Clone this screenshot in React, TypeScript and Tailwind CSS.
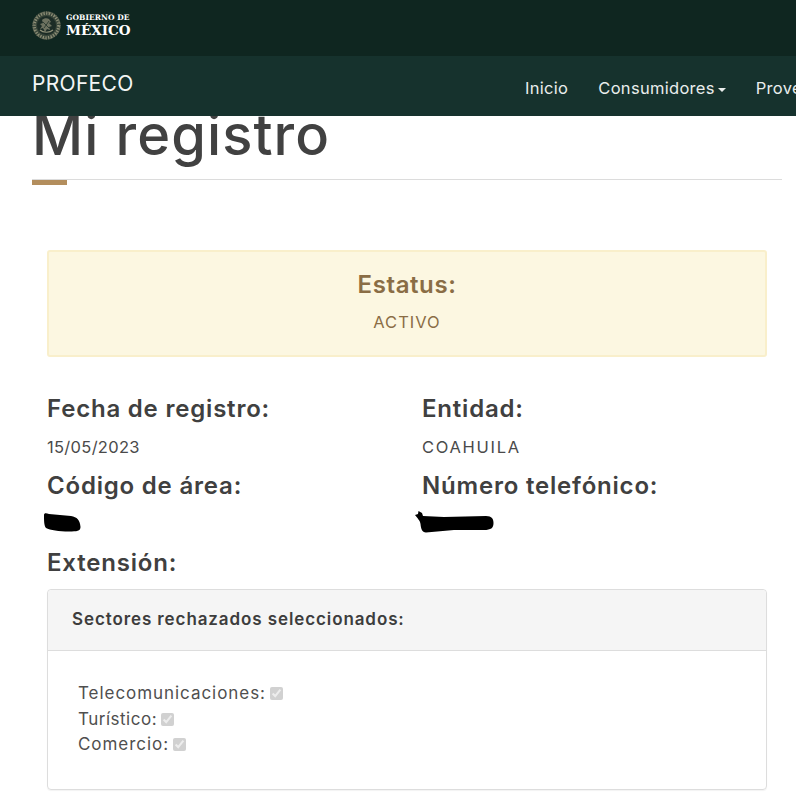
import React from "react";

const font = { fontFamily: "Inter, 'Open Sans', sans-serif" };

function Emblem() {
  const ticks = Array.from({ length: 40 }, (_, i) => (i * 360) / 40);
  return (
    <svg width="29" height="29" viewBox="0 0 29 29" className="shrink-0">
      <circle cx="14.5" cy="14.5" r="14.3" fill="#39463a" />
      <circle cx="14.5" cy="14.5" r="12.2" fill="none" stroke="#8f9078" strokeWidth="3" strokeDasharray="1.3 1.4" />
      {ticks.map((a) => (
        <line key={a} x1="14.5" y1="0.4" x2="14.5" y2="2" stroke="#6f7360" strokeWidth="0.8" transform={`rotate(${a} 14.5 14.5)`} />
      ))}
      <circle cx="14.5" cy="14.5" r="9.6" fill="#1c2c26" />
      <path d="M10 9c2-2 5-2 7-1l2 3-2 1 3 3-3 1 1 3-3-1-2 3-2-4-3 1 2-3-2-2 3-1z" fill="#6e7260" />
      <path d="M8 19c3 3 10 3 13 0" fill="none" stroke="#8f9078" strokeWidth="1.2" />
      <path d="M11 11l6 6M17 10l-5 7" stroke="#23332b" strokeWidth="0.8" />
    </svg>
  );
}

function Label({ children }: { children: React.ReactNode }) {
  return <h4 className="text-[24px] leading-[30px] font-semibold text-[#404040] tracking-[0.8px]">{children}</h4>;
}

function Value({ children, className = "" }: { children?: React.ReactNode; className?: string }) {
  return <div className={`h-[47px] pt-[12px] text-[16.5px] leading-[22px] text-[#4a4a4a] ${className}`}>{children}</div>;
}

function Check({ label, className = "" }: { label: string; className?: string }) {
  return (
    <div className={`flex items-center h-[25.5px] text-[#4f4f4f] text-[17px] leading-[25px] ${className}`}>
      <span>{label}:</span>
      <input type="checkbox" checked disabled readOnly className="ml-[4px] w-[13px] h-[13px]" />
    </div>
  );
}

export default function App() {
  return (
    <div className="w-[796px] h-[807px] overflow-hidden bg-white" style={font}>
      <header className="relative z-10 h-[56px] bg-[#0f2620] flex items-center pl-[32px] pb-[6px] gap-[5px]">
        <Emblem />
        <div className="text-white font-bold pt-[1px]" style={{ fontFamily: "'DejaVu Serif', serif" }}>
          <div className="text-[7.5px] leading-[10px] tracking-[0.05px]">GOBIERNO DE</div>
          <div className="text-[13.5px] leading-[15px]">MÉXICO</div>
        </div>
      </header>
      <nav className="relative z-10 h-[60px] bg-[#16322d] flex justify-between text-white overflow-hidden">
        <a className="ml-[32px] mt-[14px] text-[21px] leading-[28px] text-[#f4f6f5] tracking-[0.3px]">PROFECO</a>
        <ul className="flex shrink-0 gap-[30px] h-[22px] mt-[21px] text-[16.5px] leading-[22px] text-[#e9edec] -mr-[50px] w-[321px] tracking-[0.3px]">
          <li>Inicio</li>
          <li className="flex items-center">
            Consumidores
            <span className="ml-[3px] mt-[3px] w-0 h-0 border-x-[4px] border-x-transparent border-t-[4px] border-t-[#e9edec]" />
          </li>
          <li>Proveedores</li>
        </ul>
      </nav>
      <main className="pl-[32px] pr-[14px]">
        <div className="relative flow-root border-b border-[#dcdcdc] h-[64px]">
          <h1 className="-mt-[14px] text-[56px] leading-[66px] font-[550] text-[#414141] tracking-[1.1px]">Mi registro</h1>
          <span className="absolute left-0 top-[64px] w-[35px] h-[5px] bg-[#b38e5d]" />
        </div>
        <div className="pl-[15px] pr-[15px]">
          <div className="mt-[70px] h-[107px] rounded-[3px] border-2 border-[#f9efcb] bg-[#fcf7e1] flex flex-col items-center text-[#8a6d45]">
            <div className="mt-[18px] text-[24px] leading-[30px] font-semibold tracking-[0.6px]">Estatus:</div>
            <div className="mt-[11px] text-[16.5px] leading-[22px] tracking-[1px]">ACTIVO</div>
          </div>
          <div className="mt-[37px] grid grid-cols-[375px_1fr]">
            <div>
              <Label>Fecha de registro:</Label>
              <Value className="tracking-[0.3px]">15/05/2023</Value>
            </div>
            <div>
              <Label>Entidad:</Label>
              <Value className="tracking-[1.7px]">COAHUILA</Value>
            </div>
            <div>
              <Label>Código de área:</Label>
              <Value>
                <svg width="40" height="22" viewBox="0 0 40 22" className="-ml-[4px] -mt-[1px] block">
                  <path d="M1 3 C1 1 3 1 6 2 L28 4 C34 5 37 8 37.500 15 C37.500 19 34 19.500 26 19.500 C16 19.500 7 18 3 16 C1 14 1 8 1 3Z" fill="#000" />
                </svg>
              </Value>
            </div>
            <div>
              <Label>Número telefónico:</Label>
              <Value>
                <svg width="82" height="26" viewBox="0 0 82 26" className="-ml-[8px] -mt-[4px] block">
                  <path d="M1 6 L4 5 L4.500 2 L8 4 L9 7 L30 8 L72 7 C78 7 79.500 10 79.500 14 C79.500 19 77 21 70 21 L40 21 L12 23.500 C8 23 7 20 6.500 15 C6 11 3 9 1 6Z" fill="#000" />
                </svg>
              </Value>
            </div>
          </div>
          <Label>Extensión:</Label>
          <section className="mt-[11px] h-[201px] rounded-[4px] border border-[#dddddd] shadow-[0_1px_1px_rgba(0,0,0,0.05)]">
            <div className="h-[61px] bg-[#f5f5f5] border-b border-[#dddddd] rounded-t-[4px] flex items-center pl-[24px] text-[17px] font-semibold text-[#3d3d3d] tracking-[0.9px]">
              Sectores rechazados seleccionados:
            </div>
            <div className="pl-[30px] pt-[30px]">
              <Check label="Telecomunicaciones" className="tracking-[0.95px]" />
              <Check label="Turístico" className="tracking-[0.5px]" />
              <Check label="Comercio" className="tracking-[0.95px]" />
            </div>
          </section>
        </div>
      </main>
    </div>
  );
}
